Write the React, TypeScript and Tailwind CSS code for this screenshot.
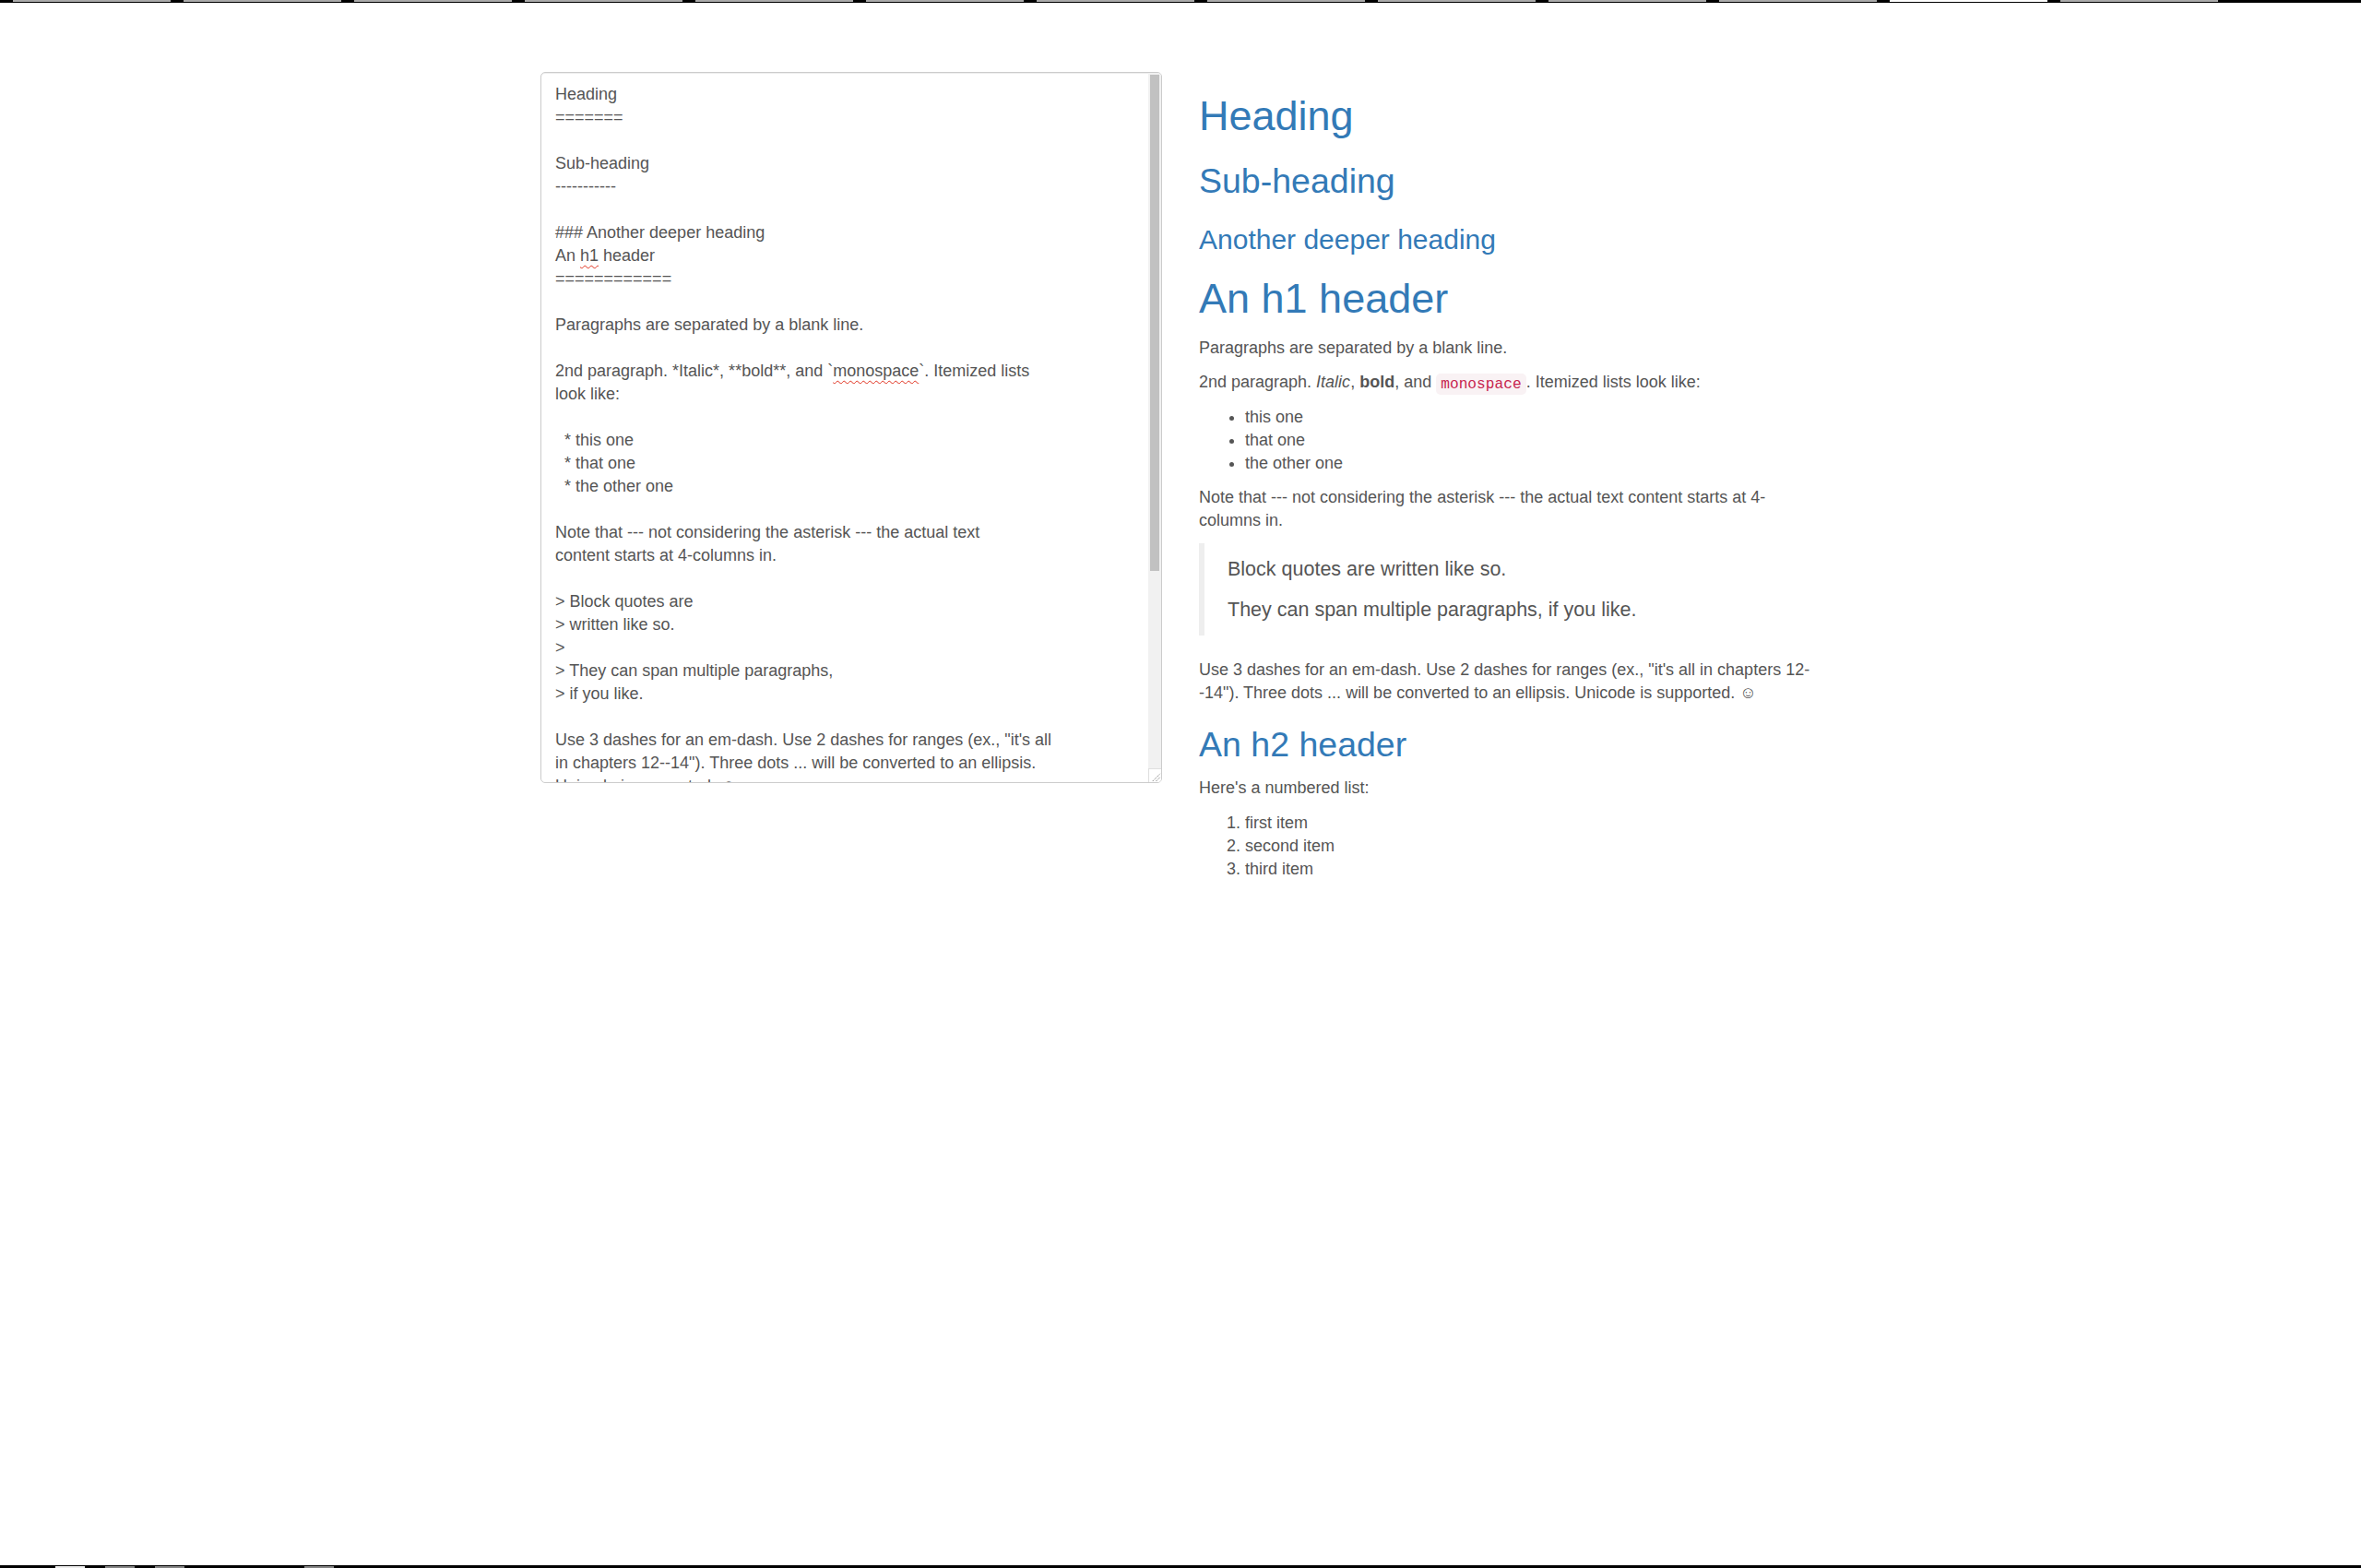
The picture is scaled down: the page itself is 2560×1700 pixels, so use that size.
import React from "react"

const SANS = "font-['Liberation_Sans',Arial,sans-serif]"

function Misspelled({ children }: { children: React.ReactNode }) {
  return (
    <span className="underline decoration-[#e0301e] decoration-wavy decoration-1 underline-offset-[4px]">
      {children}
    </span>
  )
}

const editorLines: React.ReactNode[] = [
  "Heading",
  "=======",
  "",
  "Sub-heading",
  "-----------",
  "",
  "### Another deeper heading",
  <>
    An <Misspelled>h1</Misspelled> header
  </>,
  "============",
  "",
  "Paragraphs are separated by a blank line.",
  "",
  <>
    2nd paragraph. *Italic*, **bold**, and `<Misspelled>monospace</Misspelled>`. Itemized lists
  </>,
  "look like:",
  "",
  "  * this one",
  "  * that one",
  "  * the other one",
  "",
  "Note that --- not considering the asterisk --- the actual text",
  "content starts at 4-columns in.",
  "",
  "> Block quotes are",
  "> written like so.",
  ">",
  "> They can span multiple paragraphs,",
  "> if you like.",
  "",
  'Use 3 dashes for an em-dash. Use 2 dashes for ranges (ex., "it\'s all',
  'in chapters 12--14"). Three dots ... will be converted to an ellipsis.',
  "Unicode is supported. \u263A",
  "",
  "An h2 header",
  "------------",
  "",
  "Here's a numbered list:",
  "",
  " 1. first item",
  " 2. second item",
  " 3. third item",
]

function TopStrip() {
  return (
    <div className="flex h-[3px] shrink-0 items-start gap-[14px] bg-black pl-[14px]">
      {Array.from({ length: 13 }).map((_, i) => (
        <div key={i} className={i === 11 ? "h-[2px] w-[171px] bg-white" : "h-[2px] w-[171px] bg-[#aaaaaa]"} />
      ))}
    </div>
  )
}

function BottomStrip() {
  return (
    <div className="flex h-[3px] shrink-0 items-end bg-black pl-[60px]">
      <div className="h-[2px] w-[32px] bg-[#eeeeee]" />
      <div className="ml-[22px] h-[2px] w-[32px] bg-[#858585]" />
      <div className="ml-[22px] h-[2px] w-[32px] bg-[#858585]" />
      <div className="ml-[130px] h-[2px] w-[32px] bg-[#858585]" />
    </div>
  )
}

function Editor() {
  return (
    <div className="flex h-[771px] w-[674px] shrink-0 overflow-hidden rounded-[5px] border border-[#cccccc] bg-white shadow-[inset_0_1px_1px_rgba(0,0,0,0.075)]">
      <div className="flex-1 overflow-hidden pl-[15px] pt-[10.5px] text-[18px] leading-[25px] text-[#555555]">
        {editorLines.map((line, i) => (
          <div key={i} className="min-h-[25px] whitespace-pre">
            {line}
          </div>
        ))}
      </div>
      <div className="flex w-[14px] shrink-0 flex-col">
        <div className="flex-1 bg-[#f1f1f1] px-[2px] pt-[2px]">
          <div className="h-[538px] bg-[#c1c1c1]" />
        </div>
        <div className="h-[15px] border-l border-t border-[#dedede] bg-white">
          <svg viewBox="0 0 14 15" className="h-full w-full">
            <line x1="4" y1="14" x2="13" y2="5" stroke="#777" strokeWidth="1" strokeDasharray="1.5 1" />
            <line x1="8" y1="14" x2="13" y2="9" stroke="#777" strokeWidth="1" strokeDasharray="1.5 1" />
          </svg>
        </div>
      </div>
    </div>
  )
}

function Preview() {
  const heading = "font-normal text-[#337ab7]"
  return (
    <div className="ml-[40px] flex w-[666px] flex-col text-[18px] leading-[25px] text-[#555555]">
      <h1 className={`mt-[22.5px] text-[45px] leading-[49.5px] ${heading}`}>Heading</h1>
      <h2 className={`mt-[26px] text-[37.5px] leading-[41.25px] ${heading}`}>Sub-heading</h2>
      <h3 className={`mt-[26px] text-[30px] leading-[33px] ${heading}`}>Another deeper heading</h3>
      <h1 className={`mt-[23px] text-[45px] leading-[49.5px] ${heading}`}>An h1 header</h1>
      <p className="mt-[16px]">Paragraphs are separated by a blank line.</p>
      <p className="mt-[12.5px]">
        2nd paragraph. <em>Italic</em>, <strong className="font-bold">bold</strong>, and{" "}
        <code className="rounded-[5px] bg-[#f9f2f4] px-[5px] py-[2.5px] font-['Liberation_Mono',monospace] text-[16.2px] text-[#c7254e]">
          monospace
        </code>
        . Itemized lists look like:
      </p>
      <ul className="mt-[11px] list-disc pl-[50px]">
        <li>this one</li>
        <li>that one</li>
        <li>the other one</li>
      </ul>
      <p className="mt-[12px]">
        Note that --- not considering the asterisk --- the actual text content starts at 4-columns in.
      </p>
      <blockquote className="mt-[12px] border-l-[6px] border-[#eeeeee] py-[12.5px] pl-[25px] text-[21.5px] leading-[31.25px]">
        <p>Block quotes are written like so.</p>
        <p className="mt-[12.5px]">They can span multiple paragraphs, if you like.</p>
      </blockquote>
      <p className="mt-[25px]">
        Use 3 dashes for an em-dash. Use 2 dashes for ranges (ex., "it's all in chapters 12--14"). Three dots ...
        will be converted to an ellipsis. Unicode is supported. {"\u263A"}
      </p>
      <h2 className={`mt-[23px] text-[37.5px] leading-[41.25px] ${heading}`}>An h2 header</h2>
      <p className="mt-[13.5px]">Here's a numbered list:</p>
      <ol className="mt-[12.5px] list-decimal pl-[50px]">
        <li>first item</li>
        <li>second item</li>
        <li>third item</li>
      </ol>
    </div>
  )
}

export default function App() {
  return (
    <div className={`flex h-screen flex-col overflow-hidden bg-white ${SANS}`}>
      <TopStrip />
      <main className="flex-1 overflow-hidden">
        <div className="ml-[586px] mt-[75px] flex items-start">
          <Editor />
          <Preview />
        </div>
      </main>
      <BottomStrip />
    </div>
  )
}
